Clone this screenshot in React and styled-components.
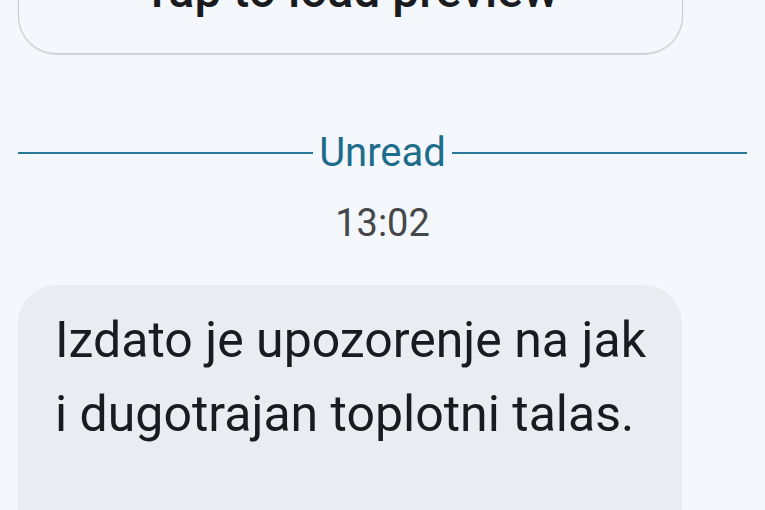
import React from 'react';
import styled, { createGlobalStyle } from 'styled-components';

const GlobalStyle = createGlobalStyle`
  html, body {
    margin: 0;
    padding: 0;
    background: #f4f8fc;
  }
  body {
    font-family: Roboto, 'Noto Sans', sans-serif;
    overflow: hidden;
  }
`;

const Thread = styled.div`
  width: 765px;
  height: 510px;
  overflow: hidden;
  background: #f4f8fc;
  display: flex;
  flex-direction: column;
`;

// link preview card, scrolled mostly out of view
const PreviewCard = styled.div`
  margin: -76px 82px 0 18px;
  height: 130px;
  flex-shrink: 0;
  box-sizing: border-box;
  border: 1.5px solid #c6c8cb;
  border-radius: 38px;
  box-shadow: 0 1px 1px rgba(0, 0, 0, 0.12);
  display: flex;
  justify-content: center;
  padding-top: 42px;
`;

const PreviewText = styled.span`
  font-size: 48px;
  font-weight: 500;
  color: #1a1b1e;
  line-height: 48px;
  height: 48px;
`;

const Divider = styled.div`
  margin-top: 79px;
  padding: 0 18px;
  display: flex;
  align-items: center;
  gap: 6px;
  color: #1d6c8c;
`;

const Rule = styled.div`
  flex: 1;
  height: 2px;
  background: #2a7898;
`;

const DividerLabel = styled.span`
  font-size: 40px;
  line-height: 40px;
`;

const Timestamp = styled.div`
  margin-top: 30px;
  text-align: center;
  font-size: 38px;
  line-height: 40px;
  color: #45474a;
`;

const Bubble = styled.div`
  margin: 42px 83px 0 18px;
  padding: 18px 30px 100px 37px;
  flex-shrink: 0;
  background: #e9edf2;
  border-radius: 38px;
  font-size: 50px;
  line-height: 74px;
  color: #1a1b1e;
`;

export default function App() {
  return (
    <>
      <GlobalStyle />
      <Thread>
        <PreviewCard>
          <PreviewText>Tap to load preview</PreviewText>
        </PreviewCard>
        <Divider>
          <Rule />
          <DividerLabel>Unread</DividerLabel>
          <Rule />
        </Divider>
        <Timestamp>13:02</Timestamp>
        <Bubble>
          Izdato je upozorenje na jak
          <br />
          i dugotrajan toplotni talas.
        </Bubble>
      </Thread>
    </>
  );
}
